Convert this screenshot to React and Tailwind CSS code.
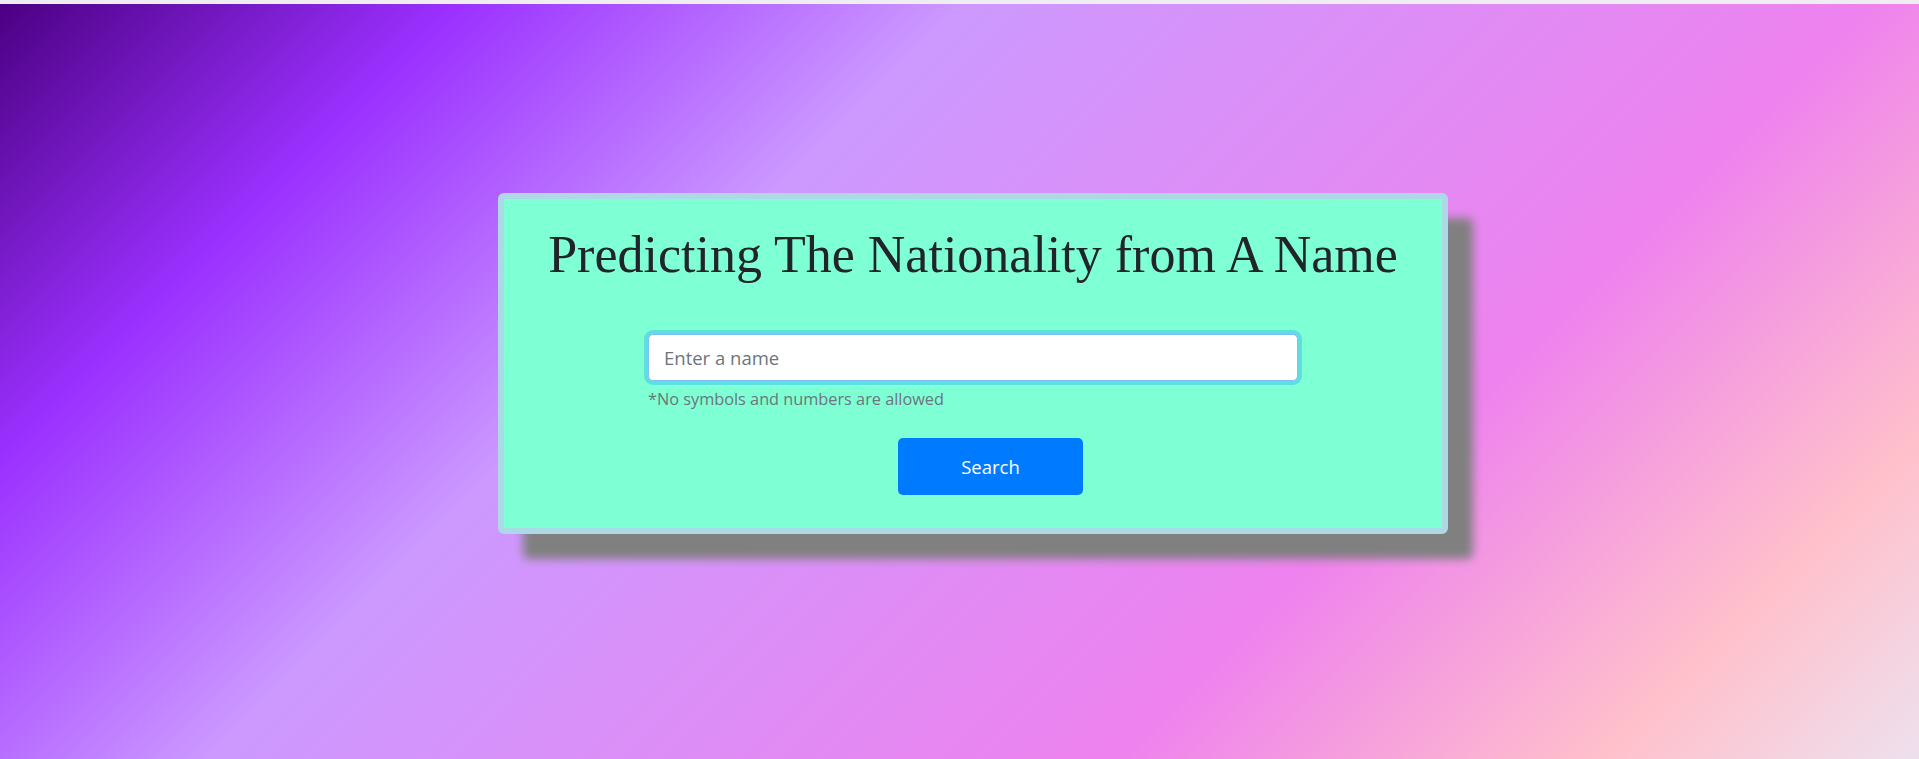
import React from 'react';

/**
 * Name nationality search page
 * Gradient backdrop with a single aquamarine card holding the title,
 * the name field (shown focused) and the search button.
 */
const App = () => {
	return (
		<div className="flex h-[759px] w-full flex-col overflow-hidden">
			{/* thin light strip above the page */}
			<div className="h-[4px] w-full bg-[#efedf1]"></div>

			{/* gradient backdrop */}
			<div className="flex-1 bg-[linear-gradient(135deg,#4b0082_0%,#9b30ff_17%,#cc99ff_36%,#ee82ee_70%,#ffc0cb_88%,#eee0ee_100%)] pl-[498px] pt-[189px]">
				{/* card */}
				<div className="flex w-[950px] flex-col rounded-[6px] border-[6px] border-[#add8e6] bg-[#7fffd4] pb-[33px] pt-[26px] shadow-[25px_25px_10px_#808080]">
					<h1 className="text-center font-['Liberation_Serif',serif] text-[52px] font-normal leading-[60px] text-[#212529]">
						Predicting The Nationality from A Name
					</h1>

					<div className="ml-[144px] mt-[49px] flex w-[650px] flex-col">
						{/* name field, drawn in its focused state */}
						<input
							type="text"
							placeholder="Enter a name"
							className="h-[47px] w-full rounded-[5px] border border-[#80bdff] bg-white px-[15px] font-['Open_Sans',sans-serif] text-[18.5px] text-[#495057] outline-none ring-4 ring-[#007bff]/25 placeholder:text-[#6c757d]"
						/>
						<small className="mt-[5px] font-['Open_Sans',sans-serif] text-[16.3px] leading-[26px] text-[#6c757d]">
							*No symbols and numbers are allowed
						</small>

						{/* search button */}
						<button
							type="button"
							className="ml-[250px] mt-[26px] h-[57px] w-[185px] rounded-[5px] bg-[#007bff] font-['Open_Sans',sans-serif] text-[18.5px] text-white"
						>
							Search
						</button>
					</div>
				</div>
			</div>
		</div>
	);
};

export default App;
